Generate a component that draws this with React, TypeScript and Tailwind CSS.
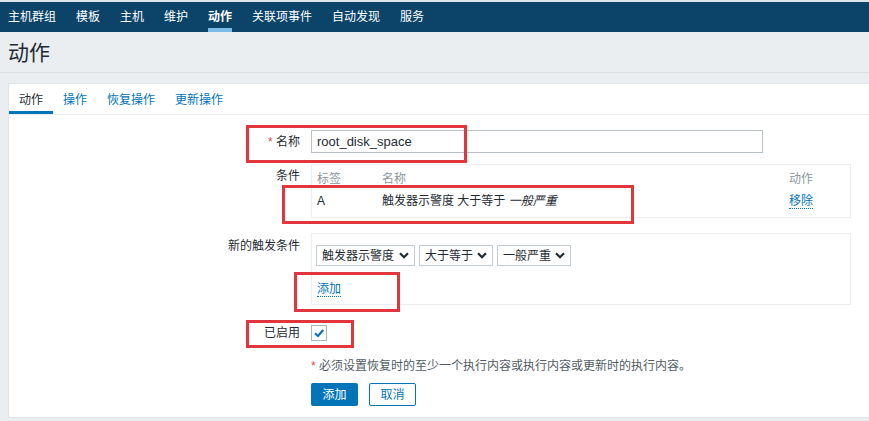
import React from 'react';

const navItems = ['主机群组', '模板', '主机', '维护', '动作', '关联项事件', '自动发现', '服务'];
const tabs = ['动作', '操作', '恢复操作', '更新操作'];

function Chevron() {
  return (
    <svg width="10" height="7" viewBox="0 0 10 7" className="ml-auto shrink-0">
      <path d="M1 1.2 L5 5.2 L9 1.2" fill="none" stroke="#1f2c33" strokeWidth="2.2" />
    </svg>
  );
}

function Select({ label, width }: { label: string; width: string }) {
  return (
    <div className={`flex h-[21px] items-center border border-[#c2ccd2] bg-white pl-[5px] pr-[5px] ${width}`}>
      <span>{label}</span>
      <Chevron />
    </div>
  );
}

export default function App() {
  return (
    <div
      className="relative h-[421px] w-[869px] overflow-hidden bg-[#ebeef0] text-[12px] leading-[18px] text-[#1f2c33]"
      style={{ fontFamily: '"Liberation Sans", "Noto Sans CJK SC", sans-serif' }}
    >
      <div className="h-[2px] bg-[#dfe6ea]" />
      {/* top menu */}
      <nav className="flex h-[30px] items-stretch gap-[20px] bg-[#0b4468] pl-2 text-white">
        {navItems.map(item => (
          <div
            key={item}
            className={`flex items-center border-y-4 border-transparent ${
              item === '动作' ? 'border-b-[#7dbbe6] font-bold' : ''
            }`}
          >
            {item}
          </div>
        ))}
      </nav>

      <div className="flex h-[41px] items-center border-b border-[#d9dee1] px-2 pt-[2px] text-[21px] leading-[26px] text-[#1f2c33]">
        动作
      </div>

      <div className="ml-2 mt-[10px] h-[335px] border-l border-t border-b border-[#dfe4e7] bg-white">
        {/* tabs */}
        <div className="flex h-[31px] border-b border-[#ebeef0]">
          {tabs.map(t => (
            <div
              key={t}
              className={`flex items-center border-b-[3px] px-[10px] pt-[5px] ${
                t === '动作' ? 'border-[#0275b8] text-[#1f2c33]' : 'border-transparent text-[#0275b8]'
              }`}
            >
              {t}
            </div>
          ))}
        </div>

        <div className="pt-[15px]">
          {/* name */}
          <div className="flex items-center">
            <div className="w-[302px] shrink-0 pr-[11px] pt-[1px] text-right">
              <span className="text-[#d64e4e]">*</span> 名称
            </div>
            <div className="flex h-[23px] w-[452px] items-center border border-[#b7c2c8] px-[5px] pt-[1px] text-[13px]">
              root_disk_space
            </div>
          </div>

          {/* conditions */}
          <div className="mt-[11px] flex items-start">
            <div className="w-[302px] shrink-0 pr-[11px] pt-[3px] text-right">条件</div>
            <div className="h-[54px] w-[540px] border border-[#ebeef0] px-[5px] pt-[5px]">
              <div className="flex h-[18px] items-center text-[#8c979d]">
                <span className="w-[65px]">标签</span>
                <span className="flex-1">名称</span>
                <span className="w-[56px]">动作</span>
              </div>
              <div className="flex h-[26px] items-center">
                <span className="w-[65px]">A</span>
                <span className="flex-1">
                  触发器示警度 大于等于 <i>一般严重</i>
                </span>
                <span className="w-[56px]">
                  <span className="border-b border-dotted border-[#0275b8] text-[#0275b8]">移除</span>
                </span>
              </div>
            </div>
          </div>

          {/* new condition */}
          <div className="mt-[15px] flex items-start">
            <div className="w-[302px] shrink-0 pr-[11px] pt-[4px] text-right">新的触发条件</div>
            <div className="h-[72px] w-[540px] border border-[#ebeef0] px-[4px] pt-[11px]">
              <div className="flex gap-[4px]">
                <Select label="触发器示警度" width="w-[99px]" />
                <Select label="大于等于" width="w-[74px]" />
                <Select label="一般严重" width="w-[74px]" />
              </div>
              <div className="mt-[14px] pl-[1px]">
                <span className="border-b border-dotted border-[#0275b8] text-[#0275b8]">添加</span>
              </div>
            </div>
          </div>

          {/* enabled */}
          <div className="mt-[18px] flex items-center">
            <div className="w-[302px] shrink-0 pr-[11px] pt-[1px] text-right">已启用</div>
            <div className="flex h-[16px] w-[16px] items-center justify-center border border-[#a9b7bf] bg-white">
              <svg width="12" height="12" viewBox="0 0 12 12">
                <path d="M2 6.2 L5 9 L10.2 3" fill="none" stroke="#0275b8" strokeWidth="2.2" />
              </svg>
            </div>
          </div>

          {/* note */}
          <div className="mt-[15px] pl-[302px] text-[#4f5c63]">
            <span className="text-[#d64e4e]">*</span> 必须设置恢复时的至少一个执行内容或执行内容或更新时的执行内容。
          </div>

          {/* buttons */}
          <div className="mt-[8px] flex gap-[11px] pl-[302px]">
            <button className="h-[23px] w-[47px] rounded-[2px] bg-[#0275b8] text-white">添加</button>
            <button className="h-[23px] w-[47px] rounded-[2px] border border-[#0275b8] bg-white text-[#0275b8]">
              取消
            </button>
          </div>
        </div>
      </div>

      {/* red annotation boxes */}
      <div className="absolute left-[246px] top-[125px] h-[38px] w-[221px] border-[3px] border-[#e3353c]" />
      <div className="absolute left-[282px] top-[185px] h-[39px] w-[352px] border-[3px] border-[#e3353c]" />
      <div className="absolute left-[294px] top-[272px] h-[40px] w-[106px] border-[3px] border-[#e3353c]" />
      <div className="absolute left-[246px] top-[320px] h-[28px] w-[108px] border-[3px] border-[#e3353c]" />
    </div>
  );
}
